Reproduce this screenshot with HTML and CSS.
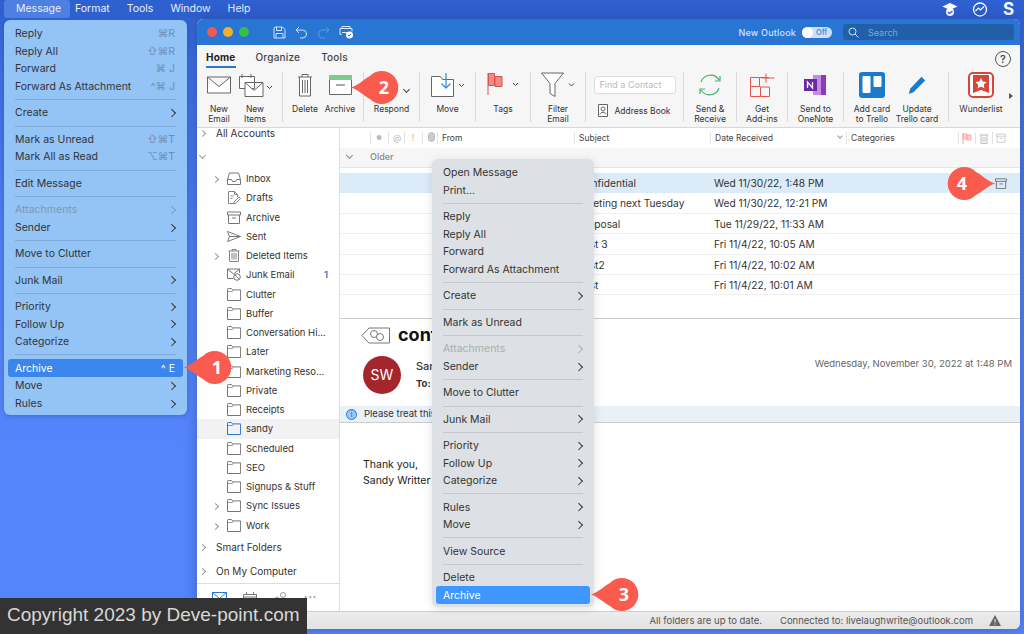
FILE: index.html
```html
<!DOCTYPE html>
<html lang="en">
<head>
<meta charset="utf-8">
<title>Outlook archive</title>
<link rel="stylesheet" href="styles.css">
</head>
<body>
<svg class="defs" width="0" height="0">
  <symbol id="folder" viewBox="0 0 14 13"><path d="M.5 12.500V1.200c0-.4.3-.7.7-.7h3.200l1.200 1.400h8v10.600z" fill="none" stroke="currentColor"/><path d="M.5 3.500h5l.8-1.500" fill="none" stroke="currentColor" stroke-width=".7"/></symbol>
  <symbol id="inbox" viewBox="0 0 14 13"><path d="M.5 7.500 2.500 1h9l2 6.500v5H.5zM.5 7.500h4l1 2h3l1-2h4" fill="none" stroke="currentColor"/></symbol>
  <symbol id="draft" viewBox="0 0 14 13"><path d="M8 12.500H1.500V.5h6l3 3V6M7.500.5v3h3M3.500 5h3M3.500 7.500h2M7 11l5-5 1.500 1.500-5 5H7z" fill="none" stroke="currentColor" stroke-width=".9"/></symbol>
  <symbol id="sent" viewBox="0 0 14 13"><path d="M.5 1.500 13.500 6.500.5 11.500l2-5zM2.500 6.500h11" fill="none" stroke="currentColor"/></symbol>
  <symbol id="trash" viewBox="0 0 14 13"><path d="M1.500 2h11M5 2V.5h4V2M2.500 2v10.500h9V2M5 4v6.500M7 4v6.500M9 4v6.500" fill="none" stroke="currentColor" stroke-width=".9"/></symbol>
  <symbol id="junk" viewBox="0 0 14 13"><path d="M6 10.500H.5V1h12v4M.5 1l6 5 6-5" fill="none" stroke="currentColor"/><circle cx="10" cy="9" r="3.300" fill="#fff" stroke="currentColor"/><path d="M7.800 6.800l4.400 4.400" stroke="currentColor"/></symbol>
  <symbol id="pin" viewBox="0 0 50 33"><path d="M0 16.500C7 14.500 13 8 19 5a16.500 16.500 0 1 1 0 23C13 25 7 18.500 0 16.500z" fill="#f95b4f"/></symbol>
  <symbol id="arch" viewBox="0 0 14 13"><path d="M.5 1h13v3H.5zM1.500 4v8.500h11V4M5 7h4" fill="none" stroke="currentColor"/></symbol>
</svg>

<header class="menubar">
  <span class="mb-item mb-active">Message</span><span class="mb-item">Format</span><span class="mb-item">Tools</span><span class="mb-item">Window</span><span class="mb-item">Help</span>
  <span class="mb-status">
    <svg width="16" height="15" viewBox="0 0 16 15"><path d="M8 1 15.500 4.500 8 8 .5 4.500z" fill="#fff"/><circle cx="8" cy="10" r="4" fill="#fff"/><path d="M6 10l1.500 1.500L10.500 9" fill="none" stroke="#2f62d0" stroke-width="1.200"/></svg>
    <svg width="16" height="15" viewBox="0 0 16 15"><circle cx="8" cy="7.500" r="6.500" fill="none" stroke="#fff" stroke-width="1.300"/><path d="M3.500 9l3-3 2 2 3.500-3.500" fill="none" stroke="#fff" stroke-width="1.200"/></svg>
    <b class="mb-s">S</b>
  </span>
</header>

<main class="window">
  <div class="titlebar">
    <i class="light red"></i><i class="light yellow"></i><i class="light green"></i>
    <span class="quick">
      <svg width="13" height="13" viewBox="0 0 13 13"><path d="M2 1h7.500L12 3.500V12H1V2zM3.500 1v3.500h5V1M3 12V7.500h7V12" fill="none" stroke="#cfe3f8"/></svg>
      <svg width="13" height="13" viewBox="0 0 13 13"><path d="M4 1 1 4l3 3M1 4h6.500a4 4 0 0 1 0 8H5" fill="none" stroke="#cfe3f8"/></svg>
      <svg width="13" height="13" viewBox="0 0 13 13"><path d="M9 1l3 3-3 3M12 4H5.500a4 4 0 0 0 0 8H8" fill="none" stroke="#5c9be0"/></svg>
      <svg width="15" height="14" viewBox="0 0 15 14"><path d="M3 3.500V1.500h8v2M2.500 9.500H1v-6h12v3M3 7.500h5" fill="none" stroke="#dbe9f8"/><circle cx="10.500" cy="10" r="3.500" fill="#fff"/><path d="M9 10l1 1 2-2" fill="none" stroke="#2a76d2"/></svg>
    </span>
    <span class="new-outlook">New Outlook</span>
    <span class="toggle"><i></i><em>Off</em></span>
    <span class="search">
      <svg width="11" height="11" viewBox="0 0 11 11"><circle cx="4.500" cy="4.500" r="3.500" fill="none" stroke="#cfe3f8"/><path d="M7 7l3.500 3.500" stroke="#cfe3f8"/></svg>
      Search
    </span>
  </div>

  <section class="ribbon">
    <nav class="tabs">
      <span class="tab tab-on">Home</span><span class="tab">Organize</span><span class="tab">Tools</span>
      <span class="help">?</span>
    </nav>
    <div class="groups">
      <div class="grp g1">
        <div class="btn w36"><svg width="24" height="17" viewBox="0 0 24 17"><path d="M.5.500h23v16H.5zM.5.500 12 10 23.500.500" fill="#fff" stroke="#666"/></svg><span>New<br>Email</span></div>
        <div class="btn w36"><svg width="33" height="24" viewBox="0 0 33 24"><path d="M.5 3.500h15v12H.5zM3 1v4M12 1v4" fill="#fff" stroke="#666"/><path d="M6 9.500h18v14H6zM6 9.500l9 8 9-8" fill="#fff" stroke="#666"/><path d="M28 13l2.500 2.500L33 13" fill="none" stroke="#444"/></svg><span>New<br>Items</span></div>
      </div>
      <div class="grp g2">
        <div class="btn w34"><svg width="16" height="24" viewBox="0 0 16 24"><path d="M1 4h14M5 4V1.500h6V4M2.500 4v19h11V4M5.500 7v13M8 7v13M10.500 7v13" fill="#fff" stroke="#666"/></svg><span>Delete</span></div>
        <div class="btn w36"><svg width="23" height="20" viewBox="0 0 23 20"><path d="M.5 4.500h22v15H.5z" fill="#fff" stroke="#666"/><path d="M0 0h23v5H0z" fill="#7ccb8f"/><path d="M7 10h9" stroke="#555"/></svg><span>Archive</span></div>
      </div>
      <div class="grp g3">
        <div class="btn full"><svg class="spacer" width="24" height="20"></svg><span>Respond</span><i class="caret"></i></div>
      </div>
      <div class="grp g4">
        <div class="btn full"><svg width="34" height="24" viewBox="0 0 34 24"><path d="M.5 4.500V23.500H22.500V6.500h-11L9.500 3.500H.5z" fill="#fff" stroke="#666"/><path d="M15 0v15M10.500 10.500 15 15l4.500-4.500" fill="none" stroke="#3a8fe0" stroke-width="1.300"/><path d="M28 11l2.500 2.500L33 11" fill="none" stroke="#444"/></svg><span>Move</span></div>
      </div>
      <div class="grp g5">
        <div class="btn full"><svg width="32" height="24" viewBox="0 0 32 24"><path d="M1 0v22" stroke="#d9534f"/><path d="M1.500.500h6v12h-6z" fill="#f08a86" stroke="#d9534f"/><path d="M8 3.500h7v10H8z" fill="#f08a86" stroke="#d9534f"/><path d="M26 10l2.500 2.500L31 10" fill="none" stroke="#444"/></svg><span>Tags</span></div>
      </div>
      <div class="grp g6">
        <div class="btn full"><svg width="34" height="25" viewBox="0 0 34 25"><path d="M.5.500h22L14 11v13l-5-3V11z" fill="#fff" stroke="#666"/><path d="M28 11l2.500 2.500L33 11" fill="none" stroke="#444"/></svg><span>Filter<br>Email</span></div>
      </div>
      <div class="grp g7">
        <div class="find">Find a Contact</div>
        <div class="addr"><svg width="10" height="13" viewBox="0 0 10 13"><path d="M.5.500h9v12h-9z" fill="#fff" stroke="#666"/><circle cx="5" cy="5" r="2" fill="none" stroke="#666"/><path d="M2 10.500c0-3 6-3 6 0" fill="none" stroke="#666"/></svg>Address Book</div>
      </div>
      <div class="grp g8">
        <div class="btn full"><svg width="24" height="24" viewBox="0 0 24 24"><path d="M3 9a10 10 0 0 1 18-2M21 15a10 10 0 0 1-18 2M17 8h5V3M7 16H2v5" fill="none" stroke="#3db56b" stroke-width="1.200"/></svg><span>Send &amp;<br>Receive</span></div>
      </div>
      <div class="grp g9">
        <div class="btn full"><svg width="25" height="24" viewBox="0 0 25 24"><path d="M.5 4.500h9v9h-9zM10 4.500h9M19.500 14v9.500h-9V14zM.5 14v9.500h9.500M16 .5v9M11.500 5h13" fill="none" stroke="#e5534b"/></svg><span>Get<br>Add-ins</span></div>
      </div>
      <div class="grp g10">
        <div class="btn full"><svg width="24" height="22" viewBox="0 0 24 22"><path d="M9 1h13v20H9z" fill="#c58be0"/><path d="M17 1h5v20h-5z" fill="#8a3cb8"/><path d="M0 5h13v12H0z" fill="#6b2aa5"/><path d="M3.500 14V8l5 6V8" fill="none" stroke="#fff" stroke-width="1.300"/></svg><span>Send to<br>OneNote</span></div>
      </div>
      <div class="grp g11">
        <div class="btn w50"><svg width="26" height="26" viewBox="0 0 26 26"><rect width="26" height="26" rx="3" fill="#1b7ac9"/><rect x="3.500" y="4" width="8" height="17" rx="1" fill="#fff"/><rect x="14.500" y="4" width="8" height="11" rx="1" fill="#fff"/></svg><span>Add card<br>to Trello</span></div>
        <div class="btn w40"><svg width="20" height="24" viewBox="0 0 22 24"><path d="M2 22l1.500-6L16 3l4 4L7 20z" fill="#1b7ac9"/></svg><span>Update<br>Trello card</span></div>
      </div>
      <div class="grp g12">
        <div class="btn full"><svg width="26" height="26" viewBox="0 0 26 26"><rect x="1" y="1" width="24" height="24" rx="4" fill="#fff" stroke="#d9453a" stroke-width="2"/><path d="M5 3h16v18l-8-3-8 3z" fill="#d9453a"/><path d="M13 6l1.700 3.600 3.800.5-2.800 2.600.7 3.800-3.400-1.900-3.400 1.900.7-3.800-2.800-2.600 3.800-.5z" fill="#fff"/></svg><span>Wunderlist</span></div>
      </div>
      <i class="more-tri"></i>
    </div>
  </section>

  <div class="body">
    <aside class="side">
      <div class="top-row first"><i class="chev"></i>All Accounts</div>
      <div class="acct"><i class="chev down"></i></div>
      <div class="f"><i class="chev"></i><svg class="fi"><use href="#inbox"/></svg>Inbox</div>
      <div class="f"><svg class="fi"><use href="#draft"/></svg>Drafts</div>
      <div class="f"><svg class="fi"><use href="#arch"/></svg>Archive</div>
      <div class="f"><svg class="fi"><use href="#sent"/></svg>Sent</div>
      <div class="f"><i class="chev"></i><svg class="fi"><use href="#trash"/></svg>Deleted Items</div>
      <div class="f"><svg class="fi"><use href="#junk"/></svg>Junk Email<b class="count">1</b></div>
      <div class="f"><svg class="fi"><use href="#folder"/></svg>Clutter</div>
      <div class="f"><svg class="fi"><use href="#folder"/></svg>Buffer</div>
      <div class="f"><svg class="fi"><use href="#folder"/></svg>Conversation Hi...</div>
      <div class="f"><svg class="fi"><use href="#folder"/></svg>Later</div>
      <div class="f"><svg class="fi"><use href="#folder"/></svg>Marketing Reso...</div>
      <div class="f"><svg class="fi"><use href="#folder"/></svg>Private</div>
      <div class="f"><svg class="fi"><use href="#folder"/></svg>Receipts</div>
      <div class="f f-on"><svg class="fi"><use href="#folder"/></svg>sandy</div>
      <div class="f"><svg class="fi"><use href="#folder"/></svg>Scheduled</div>
      <div class="f"><svg class="fi"><use href="#folder"/></svg>SEO</div>
      <div class="f"><svg class="fi"><use href="#folder"/></svg>Signups &amp; Stuff</div>
      <div class="f"><i class="chev"></i><svg class="fi"><use href="#folder"/></svg>Sync Issues</div>
      <div class="f"><i class="chev"></i><svg class="fi"><use href="#folder"/></svg>Work</div>
      <div class="top-row"><i class="chev"></i>Smart Folders</div>
      <div class="top-row"><i class="chev"></i>On My Computer</div>
      <div class="side-foot">
        <svg width="15" height="11" viewBox="0 0 15 11"><path d="M.5.500h14v10H.5zM.5.500l7 6 7-6" fill="none" stroke="#2a76d2"/></svg>
        <svg width="14" height="13" viewBox="0 0 14 13"><path d="M.5 2.500h13v10H.5zM.5 5h13M3.500 0v3M10.500 0v3" fill="none" stroke="#777"/></svg>
        <svg width="15" height="13" viewBox="0 0 15 13"><circle cx="10" cy="3" r="2.500" fill="none" stroke="#999"/><circle cx="4" cy="7" r="2" fill="none" stroke="#999"/></svg>
        <span class="dots">•••</span>
      </div>
    </aside>

    <div class="content">
      <div class="lhead">
        <span class="hc h-dot">●</span><span class="hc h-at">@</span><span class="hc h-ex">!</span>
        <span class="hc h-cl"><svg width="7" height="10" viewBox="0 0 7 10"><rect x=".5" y=".5" width="6" height="9" rx="3" fill="#ccc" stroke="#bbb"/></svg></span>
        <span class="lh-col c-from">From</span><span class="lh-col c-subj">Subject</span><span class="lh-col c-date">Date Received<i class="chev down small"></i></span><span class="lh-col c-cat">Categories</span>
        <span class="lh-icons">
          <span class="ic"><svg width="10" height="11" viewBox="0 0 10 11"><path d="M1 0v11M1 1h4v5H1zM5 2h4v5H5z" fill="#fbd5d2" stroke="#f6aaa6"/></svg></span>
          <span class="ic"><svg width="10" height="11" viewBox="0 0 10 11"><path d="M1 2h8M2 2v8.500h6V2M4 4v5M6 4v5" fill="none" stroke="#bbb"/></svg></span>
          <span class="ic ar"><svg width="10" height="10"><use href="#arch"/></svg></span>
        </span>
      </div>
      <div class="older"><i class="chev down"></i>Older</div>
      <div class="rows">
        <div class="row row-on"><span class="c-subj">Confidential</span><span class="c-date">Wed 11/30/22, 1:48 PM</span><svg class="row-ar" width="12" height="11"><use href="#arch"/></svg></div>
        <div class="row"><span class="c-subj">Meeting next Tuesday</span><span class="c-date">Wed 11/30/22, 12:21 PM</span></div>
        <div class="row"><span class="c-subj">Proposal</span><span class="c-date">Tue 11/29/22, 11:33 AM</span></div>
        <div class="row"><span class="c-subj">Test 3</span><span class="c-date">Fri 11/4/22, 10:05 AM</span></div>
        <div class="row"><span class="c-subj">Test2</span><span class="c-date">Fri 11/4/22, 10:02 AM</span></div>
        <div class="row"><span class="c-subj">Test</span><span class="c-date">Fri 11/4/22, 10:01 AM</span></div>
      </div>
      <article class="reading">
        <div class="r-title">
          <svg width="30" height="17" viewBox="0 0 30 17"><path d="M1 8.500 8 1h20.500v15H8z" fill="#fff" stroke="#777"/><circle cx="13" cy="7" r="3.500" fill="#fff" stroke="#777"/><circle cx="19" cy="10" r="3.500" fill="#fff" stroke="#777"/></svg>
          <h1>confidential</h1>
        </div>
        <div class="r-from">
          <span class="avatar">SW</span>
          <div class="r-names"><div class="r-name">Sandy Writter</div><div class="r-to"><b>To:</b> Sandy</div></div>
          <time>Wednesday, November 30, 2022 at 1:48 PM</time>
        </div>
        <div class="r-info"><i class="info-i">i</i>Please treat this as confidential.</div>
        <p class="r-body">Thank you,<br>Sandy Writter</p>
      </article>
    </div>
  </div>

  <footer class="status">
    <span class="st-a">All folders are up to date.</span>
    <span class="st-b">Connected to: livelaughwrite@outlook.com</span>
    <svg width="12" height="11" viewBox="0 0 12 11"><path d="M6 0l6 11H0z" fill="#666"/><path d="M6 4v3.500M6 8.500v1" stroke="#eee"/></svg>
  </footer>
</main>

<div class="menu menu-main">
  <div class="mi"><span>Reply</span><span class="sc">⌘R</span></div>
  <div class="mi"><span>Reply All</span><span class="sc">⇧⌘R</span></div>
  <div class="mi"><span>Forward</span><span class="sc">⌘ J</span></div>
  <div class="mi"><span>Forward As Attachment</span><span class="sc">^⌘ J</span></div>
  <div class="sep"></div>
  <div class="mi"><span>Create</span><i class="arrow"></i></div>
  <div class="sep"></div>
  <div class="mi"><span>Mark as Unread</span><span class="sc">⇧⌘T</span></div>
  <div class="mi"><span>Mark All as Read</span><span class="sc">⌥⌘T</span></div>
  <div class="sep"></div>
  <div class="mi"><span>Edit Message</span></div>
  <div class="sep"></div>
  <div class="mi off"><span>Attachments</span><i class="arrow"></i></div>
  <div class="mi"><span>Sender</span><i class="arrow"></i></div>
  <div class="sep"></div>
  <div class="mi"><span>Move to Clutter</span></div>
  <div class="sep"></div>
  <div class="mi"><span>Junk Mail</span><i class="arrow"></i></div>
  <div class="sep"></div>
  <div class="mi"><span>Priority</span><i class="arrow"></i></div>
  <div class="mi"><span>Follow Up</span><i class="arrow"></i></div>
  <div class="mi"><span>Categorize</span><i class="arrow"></i></div>
  <div class="sep"></div>
  <div class="mi hl"><span>Archive</span><span class="sc">^ E</span></div>
  <div class="mi"><span>Move</span><i class="arrow"></i></div>
  <div class="mi"><span>Rules</span><i class="arrow"></i></div>
</div>

<div class="menu menu-ctx">
  <div class="mi"><span>Open Message</span></div>
  <div class="mi"><span>Print...</span></div>
  <div class="sep"></div>
  <div class="mi"><span>Reply</span></div>
  <div class="mi"><span>Reply All</span></div>
  <div class="mi"><span>Forward</span></div>
  <div class="mi"><span>Forward As Attachment</span></div>
  <div class="sep"></div>
  <div class="mi"><span>Create</span><i class="arrow"></i></div>
  <div class="sep"></div>
  <div class="mi"><span>Mark as Unread</span></div>
  <div class="sep"></div>
  <div class="mi off"><span>Attachments</span><i class="arrow"></i></div>
  <div class="mi"><span>Sender</span><i class="arrow"></i></div>
  <div class="sep"></div>
  <div class="mi"><span>Move to Clutter</span></div>
  <div class="sep"></div>
  <div class="mi"><span>Junk Mail</span><i class="arrow"></i></div>
  <div class="sep"></div>
  <div class="mi"><span>Priority</span><i class="arrow"></i></div>
  <div class="mi"><span>Follow Up</span><i class="arrow"></i></div>
  <div class="mi"><span>Categorize</span><i class="arrow"></i></div>
  <div class="sep"></div>
  <div class="mi"><span>Rules</span><i class="arrow"></i></div>
  <div class="mi"><span>Move</span><i class="arrow"></i></div>
  <div class="sep"></div>
  <div class="mi"><span>View Source</span></div>
  <div class="sep"></div>
  <div class="mi"><span>Delete</span></div>
  <div class="mi hl2"><span>Archive</span></div>
</div>

<div class="pin p1"><svg width="50" height="33"><use href="#pin"/></svg><b>1</b></div>
<div class="pin p2"><svg width="50" height="33"><use href="#pin"/></svg><b>2</b></div>
<div class="pin p3"><svg width="50" height="33"><use href="#pin"/></svg><b>3</b></div>
<div class="pin p4"><svg width="50" height="33"><use href="#pin"/></svg><b>4</b></div>

<div class="copyright">Copyright 2023 by Deve-point.com</div>
</body>
</html>
```

FILE: styles.css
```css
* { box-sizing: border-box; }
html, body { height: 100%; }
body {
  margin: 0;
  width: 1024px;
  height: 634px;
  overflow: hidden;
  position: relative;
  font-family: Inter, "Liberation Sans", sans-serif;
  font-size: 10px;
  color: #333;
  background: linear-gradient(180deg, #2f5fcf 0, #3e6cdc 60px, #4f7fee 250px, #5585fb 450px, #5585fb 100%);
}
.defs { position: absolute; }

/* menu bar */
.menubar {
  display: flex;
  align-items: center;
  height: 18px;
  padding-left: 4px;
  color: #e8effc;
  font-size: 10.500px;
  background: #2f60cf;
}
.mb-item { padding: 0 6px; height: 18px; line-height: 18px; margin-right: 5px; }
.mb-active { width: 66px; padding-left: 12px; margin-right: 0; background: #4d80e0; border-radius: 3px; }
.menubar .mb-item:nth-child(2) { padding-left: 5px; }
.mb-status { margin-left: auto; display: flex; align-items: center; gap: 14px; padding-right: 9px; }
.mb-s { color: #fff; font-size: 17px; font-weight: 700; width: 12px; margin-left: 1px; }

/* window */
.window {
  position: absolute;
  left: 197px;
  top: 19px;
  width: 823px;
  height: 610px;
  display: flex;
  flex-direction: column;
  border-radius: 6px;
  overflow: hidden;
  background: #fff;
  box-shadow: 0 0 14px rgba(20, 40, 110, .35);
}
.titlebar {
  flex: none;
  height: 26px;
  display: flex;
  align-items: center;
  padding-left: 10px;
  background: #2975d3;
  color: #d7e7fa;
}
.light { width: 10px; height: 10px; border-radius: 50%; margin-right: 6px; }
.red { background: #ee5a52; }
.yellow { background: #f4b02c; }
.green { background: #33c048; }
.quick { display: flex; align-items: center; gap: 9px; margin-left: 18px; }
.new-outlook { margin-left: auto; font-weight: 500; font-size: 9px; color: #cfe2f8; letter-spacing: .2px; }
.toggle { display: flex; align-items: center; width: 30px; height: 11px; margin: 0 11px 0 6px; background: #cfe0f5; border-radius: 6px; }
.toggle i { width: 11px; height: 11px; border-radius: 50%; background: #fff; }
.toggle em { font-style: normal; font-size: 7.500px; color: #4d8ed8; margin-left: 3px; font-weight: 600; }
.search {
  width: 171px; height: 16px; margin-right: 6px; padding-left: 5px;
  display: flex; align-items: center; gap: 9px;
  background: #215fa8; border-radius: 3px; color: #7fa9d6; font-size: 9px;
}

/* ribbon */
.ribbon { flex: none; height: 83px; background: #f6f6f6; border-bottom: 1px solid #d8d8d8; }
.tabs { display: flex; align-items: flex-start; height: 27px; padding: 6px 0 0 9px; font-size: 10px; font-weight: 500; color: #444; }
.tab { margin-right: 21px; padding-bottom: 3px; line-height: 12px; letter-spacing: .2px; }
.tab-on { font-weight: 700; color: #222; border-bottom: 2px solid #2a76d2; margin-right: 20px; }
.help { margin-left: auto; margin-right: 9px; width: 16px; height: 16px; border: 1px solid #555; border-radius: 50%; text-align: center; font-size: 11px; line-height: 14px; }
.groups { display: flex; align-items: stretch; height: 50px; }
.grp { display: flex; flex: none; border-right: 1px solid #d9d9d9; justify-content: center; position: relative; }
.g1 { width: 86px; padding-left: 4px; justify-content: flex-start; }
.g2 { width: 81px; padding-left: 5px; justify-content: flex-start; }
.g3 { width: 56px; } .g4 { width: 56px; } .g5 { width: 55px; } .g6 { width: 55px; }
.g7 { width: 98px; flex-direction: column; align-items: center; justify-content: flex-start; padding-top: 4px; }
.g8 { width: 53px; } .g9 { width: 51px; } .g10 { width: 56px; }
.g11 { width: 105px; padding-left: 3px; justify-content: flex-start; }
.g12 { width: 60px; border-right: 0; padding-left: 4px; }
.btn { display: flex; flex-direction: column; align-items: center; text-align: center; font-size: 8.500px; line-height: 10px; color: #333; white-space: nowrap; }
.btn svg { height: 26px; flex: none; margin-bottom: 6px; overflow: visible; }
.btn span { display: block; }
.full { width: 100%; }
.w36 { width: 36px; }
.w34 { width: 34px; }
.w50 { width: 50px; }
.w40 { width: 40px; }
.caret { position: absolute; top: 15px; right: 10px; width: 5px; height: 5px; border: solid #444; border-width: 0 1px 1px 0; transform: rotate(45deg); }
.find { width: 82px; height: 18px; padding-left: 5px; background: #fff; border: 1px solid #ddd; border-radius: 3px; color: #bbb; font-size: 9px; line-height: 16px; white-space: nowrap; overflow: hidden; }
.addr { display: flex; align-items: center; gap: 6px; margin-top: 10px; font-size: 8.500px; white-space: nowrap; }
.more-tri { width: 0; height: 0; margin-top: 21px; border-left: 4px solid #555; border-top: 3px solid transparent; border-bottom: 3px solid transparent; }

/* body */
.body { flex: 1; display: flex; min-height: 0; }
.side { flex: none; width: 143px; border-right: 1px solid #ddd; background: #fff; display: flex; flex-direction: column; position: relative; font-size: 9.500px; }
.chev { position: absolute; width: 5px; height: 5px; border: solid #999; border-width: 1px 1px 0 0; transform: rotate(45deg); }
.chev.down { transform: rotate(135deg); }
.top-row { position: relative; height: 24px; line-height: 24px; padding-left: 19px; font-size: 10px; flex: none; white-space: nowrap; }
.top-row .chev { left: 3px; top: 10px; }
.first { height: 11px; line-height: 11px; }
.first .chev { top: 3px; }
.acct { position: relative; height: 30px; flex: none; }
.acct .chev { left: 3px; top: 14px; }
.f { position: relative; flex: none; height: 19.250px; line-height: 19.250px; padding-left: 49px; white-space: nowrap; }
.f .chev { left: 16px; top: 8px; }
.fi { position: absolute; left: 30px; top: 3px; width: 14px; height: 13px; color: #777; }
.f-on { background: #f2f2f2; }
.f-on .fi { color: #2a76d2; }
.count { position: absolute; right: 11px; top: 0; color: #2a76d2; font-weight: 600; }
.side-foot { margin-top: auto; height: 29px; flex: none; border-top: 1px solid #ddd; display: flex; align-items: flex-start; gap: 16px; padding: 8px 0 0 15px; }
.dots { color: #888; font-size: 6px; line-height: 10px; letter-spacing: 1px; }

.content { flex: 1; min-width: 0; position: relative; display: flex; flex-direction: column; background: #fff; }
.lhead { flex: none; height: 20px; position: relative; line-height: 19px; font-size: 8.500px; color: #444; }
.hc { position: absolute; top: 0; color: #bbb; width: 17px; text-align: center; border-left: 1px solid #e3e3e3; height: 12px; line-height: 12px; margin-top: 4px; }
.h-dot { left: 30px; font-size: 6px; } .h-at { left: 48px; } .h-ex { left: 64px; color: #f0938e; } .h-cl { left: 82px; }
.lh-col { position: absolute; top: 0; padding-left: 4px; height: 12px; line-height: 12px; margin-top: 4px; border-left: 1px solid #e3e3e3; }
.lhead .c-from { left: 97px; }
.lhead .c-subj { left: 234px; }
.lhead .c-date { left: 370px; width: 136px; }
.lhead .c-cat { left: 506px; }
.small { right: 4px; top: 2px; width: 4px; height: 4px; }
.lh-icons { position: absolute; left: 618px; top: 4px; height: 12px; display: flex; }
.ic { width: 17px; height: 12px; display: flex; align-items: center; justify-content: center; border-left: 1px solid #e3e3e3; }
.ar { color: #bbb; }
.older { flex: none; height: 20px; position: relative; line-height: 17px; padding-left: 30px; background: #f6f6f6; color: #888; font-size: 9px; font-weight: 500; border-bottom: 1px solid #e5e5e5; }
.older .chev { left: 7px; top: 5px; border-color: #888; }
.rows { flex: none; padding-top: 5px; height: 151px; border-bottom: 1px solid #ccc; }
.row { position: relative; height: 20.400px; line-height: 20px; font-size: 10.200px; border-bottom: 1px solid #f0f0f0; }
.row-on { background: #dcebf8; border-bottom-color: #dcebf8; }
.row .c-subj { position: absolute; left: 238px; }
.row .c-date { position: absolute; left: 374px; }
.row-ar { position: absolute; left: 655px; top: 5px; color: #666; }

.reading { flex: 1; position: relative; }
.r-title { display: flex; align-items: center; gap: 7px; padding-left: 21px; height: 32px; }
.r-title h1 { margin: 0; font-size: 18px; line-height: 22px; font-weight: 700; color: #111; white-space: nowrap; }
.r-from { position: relative; height: 42px; margin-top: 5px; }
.avatar { position: absolute; left: 23px; top: 0; width: 38px; height: 38px; border-radius: 50%; background: #a4262c; color: #fff; font-size: 14px; text-align: center; line-height: 38px; }
.r-names { position: absolute; left: 76px; top: 3px; }
.r-name { font-size: 11px; font-weight: 500; line-height: 14px; }
.r-to { font-size: 9.500px; line-height: 14px; margin-top: 4px; }
.r-from time { position: absolute; right: 8px; top: 2px; font-size: 9.500px; color: #666; }
.r-info { position: relative; height: 17px; margin-top: 8px; padding-left: 24px; line-height: 15px; background: #e9f0f8; border-bottom: 1px solid #ccc; font-size: 9.500px; }
.info-i { position: absolute; left: 6px; top: 3px; width: 11px; height: 11px; border-radius: 50%; background: #9cc8f2; border: 1px solid #2a76d2; color: #2a76d2; font-style: normal; font-size: 8px; line-height: 9px; text-align: center; }
.r-body { margin: 34px 0 0 23px; font-size: 10.500px; line-height: 16px; color: #222; }

.status {
  flex: none; height: 18px; display: flex; align-items: center; padding-right: 19px;
  background: linear-gradient(180deg, #ececec, #e2e2e2); border-top: 1px solid #ccc; color: #555; font-size: 9.500px;
}
.st-a { margin-left: auto; }
.st-b { margin: 0 16px 0 18px; }

/* menus */
.menu { position: absolute; padding: 5px 0 3px; border-radius: 6px; font-size: 10.500px; color: #333; }
.menu-main { left: 4px; top: 20px; width: 183px; background: #94c3f6; box-shadow: 0 1px 4px rgba(20, 40, 110, .3); }
.menu-ctx { left: 432px; top: 159px; width: 162px; background: #dde1e5; box-shadow: 0 2px 10px rgba(0, 0, 0, .12); }
.mi { display: flex; align-items: center; justify-content: space-between; height: 17.600px; padding: 0 12px 0 11px; white-space: nowrap; border-radius: 3px; }
.sep { height: 1px; margin: 4px 11px 3.800px; background: rgba(90, 120, 160, .35); }
.menu-ctx .sep { background: #c5c9ce; }
.sc { color: #6f8fb2; }
.arrow { width: 5.500px; height: 5.500px; border: solid #333; border-width: 1.300px 1.300px 0 0; transform: rotate(45deg); margin-right: 1px; }
.off { color: #8097ae; }
.off .arrow { border-color: #8097ae; }
.menu-ctx .off { color: #a9adb2; }
.menu-ctx .off .arrow { border-color: #a9adb2; }
.hl { margin: 0 4px; padding: 0 8px 0 7px; background: #3a86ec; color: #fff; }
.hl .sc { color: #fff; }
.hl2 { margin: 0 4px; padding: 0 7px; background: #3e96ff; color: #fff; }

/* callouts */
.pin { position: absolute; width: 50px; height: 33px; }
.pin svg { display: block; }
.pin b { position: absolute; left: 17px; top: 0; width: 32px; text-align: center; font-size: 18px; line-height: 33px; color: #fff; font-weight: 700; font-family: "Open Sans", sans-serif; }
.p1 { left: 184px; top: 351px; }
.p2 { left: 351px; top: 71px; }
.p3 { left: 591px; top: 578px; }
.p4 { left: 945px; top: 167px; }
.p4 svg { transform: scaleX(-1); }
.p4 b { left: 1px; }

.copyright {
  position: absolute; left: 0; top: 598px; width: 307px; height: 36px; padding-left: 7px;
  background: #333; color: #d8d8d8; font-family: "Liberation Sans", sans-serif; font-size: 19px; line-height: 34px; white-space: nowrap;
}
```
